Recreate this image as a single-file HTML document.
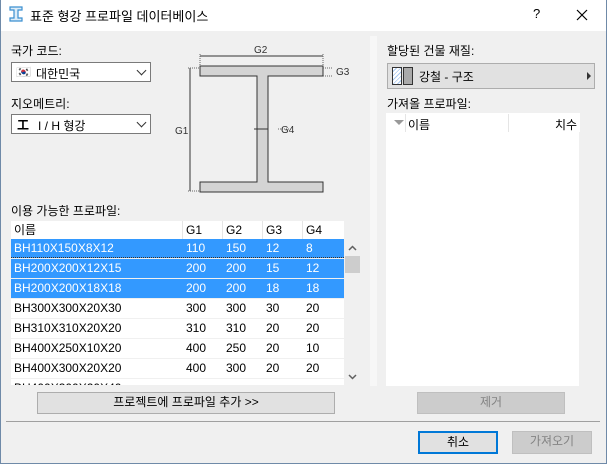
<!DOCTYPE html>
<html><head><meta charset="utf-8"><style>
*{margin:0;padding:0;box-sizing:border-box}
body{width:607px;height:464px;overflow:hidden;background:#f0f0f0;font-family:"Liberation Sans","Noto Sans CJK KR",sans-serif;font-size:12px;color:#000;position:relative}
.a{position:absolute}
.win{left:0;top:0;width:607px;height:464px;border:1px solid #6f8aa8;border-top:none}
.title{left:1px;top:0;width:605px;height:31px;background:#fff}
.combo{background:#fff;border:1px solid #7a7a7a;height:20px}
.chev{position:absolute;right:5px;top:4px;width:7px;height:7px;border-right:1px solid #333;border-bottom:1px solid #333;transform:rotate(45deg)}
.row{position:absolute;left:11px;width:333px;height:19px;background:#fff;line-height:19px}
.row.s{background:#3399ff;color:#fff}
.row span{position:absolute;top:0}
.btn{position:absolute;border:1px solid #adadad;background:#e1e1e1;text-align:center;line-height:19px}
.dis{background:#cccccc;border-color:#bfbfbf;color:#838383}
</style></head><body>
<div class="a win"></div>
<div class="a title"></div>
<svg class="a" style="left:9px;top:6px" width="14" height="16" viewBox="0 0 14 16"><path d="M1 1H13V4H9V12H13V15H1V12H5V4H1Z" fill="#dcecf8" stroke="#3b8fd0" stroke-width="1.2"/></svg>
<div class="a" style="left:30px;top:6px;font-size:13px">표준 형강 프로파일 데이터베이스</div>
<div class="a" style="left:533px;top:6px;font-size:13px">?</div>
<svg class="a" style="left:576px;top:9px" width="12" height="12"><path d="M1 1L11 11M11 1L1 11" stroke="#000" stroke-width="1.2"/></svg>

<div class="a" style="left:11px;top:42px">국가 코드:</div>
<div class="a combo" style="left:11px;top:62px;width:140px"><span class="a" style="left:4px;top:2px;font-size:12px">🇰🇷</span><span class="a" style="left:24px;top:2px">대한민국</span><div class="chev"></div></div>
<div class="a" style="left:11px;top:95px">지오메트리:</div>
<div class="a combo" style="left:11px;top:114px;width:140px"><span class="a" style="left:5px;top:1px;font-weight:bold">工</span><span class="a" style="left:26px;top:2px">I / H 형강</span><div class="chev"></div></div>

<svg class="a" style="left:170px;top:40px" width="190" height="160" viewBox="170 40 190 160" font-family="Liberation Sans" font-size="10" fill="#333">
<path d="M200 66H323V76H268V182H323V192H200V182H257V76H200Z" fill="#d4d4d4" stroke="#333"/>
<path d="M200 56H323M190 68V191" stroke="#333" stroke-width="1"/>
<path d="M200 54V66M323 54V66M188 68H200M188 191H200M323 68H333M323 76H333M278 129H290" stroke="#666" stroke-dasharray="1 1"/>
<path d="M254 129H268" stroke="#333"/>
<text x="254" y="53">G2</text><text x="336" y="75">G3</text><text x="175" y="134">G1</text><text x="281" y="133">G4</text>
</svg>

<div class="a" style="left:11px;top:202px">이용 가능한 프로파일:</div>
<div class="row" style="top:221px;height:18px;line-height:18px;color:#000"><span style="left:3px">이름</span><span style="left:175px">G1</span><span style="left:215px">G2</span><span style="left:255px">G3</span><span style="left:295px">G4</span></div>
<div class="a" style="left:182px;top:221px;width:1px;height:18px;background:#e5e5e5"></div>
<div class="a" style="left:222px;top:221px;width:1px;height:18px;background:#e5e5e5"></div>
<div class="a" style="left:262px;top:221px;width:1px;height:18px;background:#e5e5e5"></div>
<div class="a" style="left:302px;top:221px;width:1px;height:18px;background:#e5e5e5"></div>
<div class="row s" style="top:239px;border-bottom:1px dotted #333"><span style="left:3px">BH110X150X8X12</span><span style="left:175px">110</span><span style="left:215px">150</span><span style="left:255px">12</span><span style="left:295px">8</span></div>
<div class="row s" style="top:259px"><span style="left:3px">BH200X200X12X15</span><span style="left:175px">200</span><span style="left:215px">200</span><span style="left:255px">15</span><span style="left:295px">12</span></div>
<div class="row s" style="top:279px"><span style="left:3px">BH200X200X18X18</span><span style="left:175px">200</span><span style="left:215px">200</span><span style="left:255px">18</span><span style="left:295px">18</span></div>
<div class="row" style="top:299px"><span style="left:3px">BH300X300X20X30</span><span style="left:175px">300</span><span style="left:215px">300</span><span style="left:255px">30</span><span style="left:295px">20</span></div>
<div class="row" style="top:319px"><span style="left:3px">BH310X310X20X20</span><span style="left:175px">310</span><span style="left:215px">310</span><span style="left:255px">20</span><span style="left:295px">20</span></div>
<div class="row" style="top:339px"><span style="left:3px">BH400X250X10X20</span><span style="left:175px">400</span><span style="left:215px">250</span><span style="left:255px">20</span><span style="left:295px">10</span></div>
<div class="row" style="top:359px"><span style="left:3px">BH400X300X20X20</span><span style="left:175px">400</span><span style="left:215px">300</span><span style="left:255px">20</span><span style="left:295px">20</span></div>
<div class="row" style="top:379px;height:6px;overflow:hidden"><span style="left:3px">BH400X300X20X40</span></div>
<div class="a" style="left:345px;top:256px;width:15px;height:17px;background:#cdcdcd"></div>
<svg class="a" style="left:348px;top:245px" width="9" height="6"><path d="M1 5L4.5 1.5L8 5" stroke="#606060" fill="none" stroke-width="1.5"/></svg>
<svg class="a" style="left:348px;top:374px" width="9" height="6"><path d="M1 1L4.5 4.5L8 1" stroke="#606060" fill="none" stroke-width="1.5"/></svg>
<div class="btn" style="left:37px;top:392px;width:298px;height:22px">프로젝트에 프로파일 추가 &gt;&gt;</div>

<div class="a" style="left:370px;top:36px;width:7px;height:350px;background:#f7f7f7"></div>
<div class="a" style="left:387px;top:42px">할당된 건물 재질:</div>
<div class="a" style="left:387px;top:63px;width:208px;height:26px;background:#e1e1e1;border:1px solid #adadad">
<div class="a" style="left:4px;top:3px;width:10px;height:18px;border:1px solid #333;background:repeating-linear-gradient(135deg,#fff 0 2px,#a8c8f0 2px 3px)"></div>
<div class="a" style="left:15px;top:3px;width:10px;height:18px;border:1px solid #333;background:#aaa"></div>
<span class="a" style="left:31px;top:4px">강철 - 구조</span>
<div class="a" style="right:3px;top:8px;width:0;height:0;border-left:4px solid #333;border-top:4px solid transparent;border-bottom:4px solid transparent"></div></div>
<div class="a" style="left:387px;top:95px">가져올 프로파일:</div>
<div class="a" style="left:386px;top:113px;width:194px;height:273px;background:#fff"></div>
<div class="a" style="left:394px;top:120px;width:0;height:0;border-top:5px solid #999;border-left:5px solid transparent;border-right:5px solid transparent"></div>
<div class="a" style="left:405px;top:114px;width:1px;height:18px;background:#e5e5e5"></div>
<div class="a" style="left:508px;top:114px;width:1px;height:18px;background:#e5e5e5"></div>
<div class="a" style="left:408px;top:116px">이름</div>
<div class="a" style="left:555px;top:116px">치수</div>
<div class="a" style="left:579px;top:132px;width:1px;height:254px;background:#f0f0f0"></div>
<div class="btn dis" style="left:417px;top:392px;width:148px;height:22px">제거</div>

<div class="a" style="left:6px;top:421px;width:594px;height:1px;background:#a0a0a0"></div>
<div class="btn" style="left:418px;top:431px;width:80px;height:23px;border:2px solid #0078d7;line-height:19px">취소</div>
<div class="btn dis" style="left:512px;top:431px;width:80px;height:23px">가져오기</div>
</body></html>
